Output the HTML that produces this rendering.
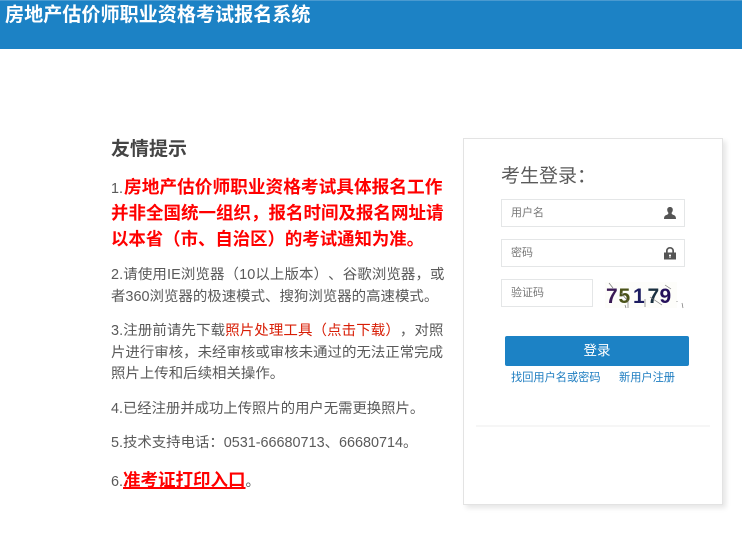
<!DOCTYPE html>
<html lang="zh-CN">
<head>
<meta charset="utf-8">
<title>房地产估价师职业资格考试报名系统</title>
<style>
html,body{margin:0;padding:0;background:#fff;}
body{width:742px;height:544px;position:relative;overflow:hidden;font-family:"Liberation Sans","Noto Sans CJK SC",sans-serif;color:#555;text-spacing-trim:space-all;font-feature-settings:"palt" 0;}
.a{position:absolute;white-space:nowrap;}
.hdr{left:0;top:0;width:742px;height:49px;background:#1c82c5;border-top:1px solid #4a9ad0;box-sizing:border-box;}
.title{left:5px;top:4px;font-size:19.1px;line-height:24px;font-weight:bold;color:#fff;}
.r{color:#f00;font-weight:bold;font-size:17.5px;}
.l{left:111px;font-size:14.45px;line-height:22px;color:#5a5a5a;}
.big{line-height:26px;font-size:14.4px;}
.sp{letter-spacing:.12px;}
.box{left:463px;top:138px;width:260px;height:367px;box-sizing:border-box;background:#fff;border:1px solid #e3e3e3;box-shadow:3px 3px 5px rgba(0,0,0,.1);}
.inp{box-sizing:border-box;border:1px solid #e4e6e7;background:#fff;height:28px;font-size:11px;line-height:27px;color:#777;padding-left:9px;}
</style>
</head>
<body>
<div class="a hdr"></div>
<div class="a title">房地产估价师职业资格考试报名系统</div>

<div class="a" style="left:111px;top:137px;font-size:19px;line-height:26px;font-weight:bold;color:#444;">友情提示</div>
<div class="a l big" style="top:174px;">1.<span class="r" style="font-size:17.7px;margin-left:1px;">房地产估价师职业资格考试具体报名工作</span></div>
<div class="a l big" style="top:200px;"><span class="r">并非全国统一组织，报名时间及报名网址请</span></div>
<div class="a l big" style="top:226px;"><span class="r" style="font-size:17.4px;">以本省（市、自治区）的考试通知为准。</span></div>
<div class="a l sp" style="top:264px;">2.请使用IE浏览器（10以上版本）、谷歌浏览器，或</div>
<div class="a l" style="top:286px;">者360浏览器的极速模式、搜狗浏览器的高速模式。</div>
<div class="a l sp" style="top:320px;">3.注册前请先下载<span style="color:#d81e06;">照片处理工具（点击下载）</span>，对照</div>
<div class="a l" style="top:342px;">片进行审核，未经审核或审核未通过的无法正常完成</div>
<div class="a l" style="top:363px;">照片上传和后续相关操作。</div>
<div class="a l" style="top:398px;font-size:14.35px;">4.已经注册并成功上传照片的用户无需更换照片。</div>
<div class="a l" style="top:432px;font-size:14.4px;">5.技术支持电话：0531-66680713、66680714。</div>
<div class="a l big" style="top:467px;">6.<span class="r" style="text-decoration:underline;text-decoration-thickness:2px;">准考证打印入口</span>。</div>

<div class="a box"></div>
<div class="a" style="left:501px;top:164px;font-size:19px;line-height:26px;color:#5a5a5a;">考生登录：</div>

<div class="a inp" style="left:501px;top:199px;width:184px;">用户名</div>
<svg class="a" style="left:663px;top:206px;" width="14" height="14" viewBox="0 0 14 14"><path fill="#555" d="M7 1C5 1 4.200 2.300 4.200 3.800C4.200 5.200 4.900 6.200 5.400 6.900C5.400 7.800 5 8.300 4 8.700C2.500 9.200 1 9.700 1 13H13C13 9.700 11.500 9.200 10 8.700C9 8.300 8.600 7.800 8.600 6.900C9.100 6.200 9.800 5.200 9.800 3.800C9.800 2.300 9 1 7 1Z"/></svg>

<div class="a inp" style="left:501px;top:239px;width:184px;">密码</div>
<svg class="a" style="left:663px;top:246px;" width="14" height="14" viewBox="0 0 14 14"><path fill="#555" fill-rule="evenodd" d="M1 6.500H3V4.800C3 2.600 4.800 1 7 1S11 2.600 11 4.800V6.500H13V13.500H1ZM4.700 6.500H9.300V4.800C9.300 3.500 8.300 2.600 7 2.600S4.700 3.500 4.700 4.800ZM6 8.600V10H6.500V12H7.500V10H8V8.600Z"/></svg>

<div class="a inp" style="left:501px;top:279px;width:92px;">验证码</div>

<svg class="a" style="left:604px;top:280px;" width="84" height="36" viewBox="0 0 84 36">
<rect x="1" y="2" width="72" height="26" fill="#fdfdfa"/>
<g font-family="Liberation Sans, sans-serif" font-size="21" font-weight="bold">
<text x="2" y="23" fill="#3a1a55">7</text>
<text x="14.500" y="23" fill="#4a5218">5</text>
<text x="29" y="23" fill="#1c1c60">1</text>
<text x="43.500" y="23" fill="#1a3040">7</text>
<text x="55.500" y="23" fill="#25105a">9</text>
</g>
<g stroke="#777" stroke-width=".7" fill="none">
<path d="M5 3L9 8"/><path d="M17 13L23 20"/><path d="M24 20V28"/><path d="M21 25L22 28"/><path d="M41 19V27"/><path d="M46 17L58 25"/><path d="M61 5L67 9"/><path d="M73 21V22"/><path d="M78 23L79 28"/>
</g>
</svg>

<div class="a" style="left:505px;top:336px;width:184px;height:30px;border-radius:2px;background:#1c82c5;color:#fff;font-size:13.5px;line-height:30px;text-align:center;">登录</div>
<div class="a" style="left:511px;top:370px;font-size:11.2px;line-height:16px;color:#1c7cc0;">找回用户名或密码</div>
<div class="a" style="left:619px;top:370px;font-size:11.2px;line-height:16px;color:#1c7cc0;">新用户注册</div>
<div class="a" style="left:476px;top:425px;width:234px;height:2px;background:#f6f6f6;"></div>
</body>
</html>
